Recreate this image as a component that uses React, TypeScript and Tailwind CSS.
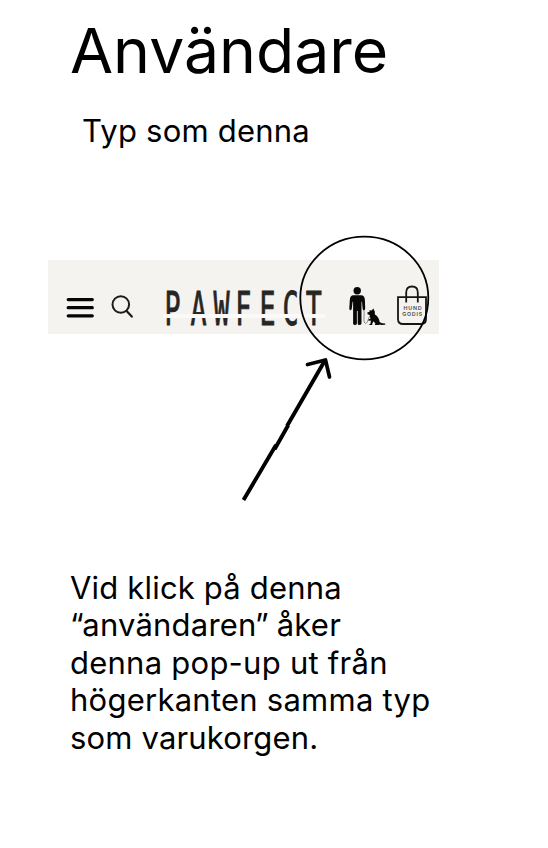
function MenuIcon() {
  return (
    <svg className="mt-[37px] h-[22px] w-[28px] shrink-0" viewBox="0 0 28 22" stroke="#050505" strokeWidth="3.2" strokeLinecap="round">
      <path d="M2.2 2.6H26.3M2.2 10.7H26.3M2.2 18.8H26.3" />
    </svg>
  );
}

function SearchIcon() {
  return (
    <svg className="mt-[34px] ml-[17px] h-[25px] w-[23px] shrink-0" viewBox="0 0 23 25" fill="none" stroke="#1c1c1b">
      <circle cx="9.8" cy="10.5" r="8.3" strokeWidth="2" />
      <path d="M15.6 17L20.8 22.6" strokeWidth="2.2" strokeLinecap="round" />
    </svg>
  );
}

function Logo() {
  return (
    <svg className="mt-[26px] ml-[29px] h-[46px] w-[162px] shrink-0 overflow-visible" viewBox="0 0 162 46">
      <text
        transform="translate(0 39.2) scale(0.58 1)"
        x="2.8 47.5 87 124.5 166.5 206 246"
        fontFamily="DejaVu Sans Mono, monospace"
        fontSize="46"
        fill="#262523"
        stroke="#262523"
        strokeWidth="0.9"
      >
        PAWFECT
      </text>
      <rect y="28" width="162" height="4" fill="#fbfaf8" />
    </svg>
  );
}

function UserIcon() {
  return (
    <svg className="mt-[26px] ml-[23px] h-[41px] w-[38px] shrink-0" viewBox="0 0 38 41" fill="#080808">
      <circle cx="9.2" cy="4.8" r="3.7" />
      <path d="M5.5 9.2H13Q16.8 9.2 16.9 14L17.2 22.6Q17 24.5 15.8 24.4Q14.8 24.3 14.6 22.5L14 15.8H13.5V37.5Q13.2 39 11.4 39Q9.8 39 9.7 37.5V25H8.9V37.5Q8.7 39 7 39Q5.3 39 5.1 37.5V15.8H4.6L3.8 22.5Q3.6 24.3 2.5 24.3Q1.2 24.2 1.3 22.5L1.8 14Q2 9.2 5.5 9.2Z" />
      <path d="M15.8 24C17 27 14.6 37 17.3 37.3C20.2 37.5 20 31 23 28.2" fill="none" stroke="#666" strokeWidth=".8" />
      <path d="M21.4 24.2L23.6 24.4L25.4 22.6L26.2 24.6L26.8 25.4L26.9 28.5Q30.9 30.8 31.6 36L34 37.2L37.2 37.6V38.7L33.5 38.9L31.6 38.4L31 39.1H26.7L27.4 37.8L25.6 35.2L24.2 37.8V39.1H21.2L21.4 38.2L22.6 37.6L22.8 34.6L20.4 34.7V33.6L22.4 32.8L21.8 29L19.6 28.3L19.3 26.5L21.6 25.7Z" />
    </svg>
  );
}

function BagIcon() {
  return (
    <svg className="mt-[25px] ml-[10px] h-[41px] w-[32px] shrink-0" viewBox="0 0 32 41">
      <g fill="none" stroke="#161615" strokeWidth="1.8">
        <path d="M2 12.2H30V34Q30 39 25 39H7Q2 39 2 34Z" />
        <path d="M10.2 17.4V7.5Q10.2 1.5 16 1.5Q21.8 1.5 21.8 7.5V17.4" />
      </g>
      <g fill="#4b4b49" fontFamily="Inter, sans-serif" fontSize="5.3" fontWeight="600">
        <text x="7.5" y="25" textLength="18">HUND</text>
        <text x="6.2" y="31.2" textLength="20">GODIS</text>
      </g>
    </svg>
  );
}

export default function App() {
  return (
    <main className="relative h-[848px] w-[548px] overflow-hidden bg-white font-['Inter',sans-serif] text-black">
      <h1 className="pt-[12px] pl-[70px] text-[62.5px] leading-[76px] font-normal">Användare</h1>
      <p className="pt-[23.5px] pl-[82px] text-[31px] leading-[37.5px] tracking-[0.22px]">Typ som denna</p>
      <header className="mt-[111px] ml-[48px] flex h-[74px] w-[391px] items-start bg-[#f4f3f0] pl-[18px]">
        <MenuIcon />
        <SearchIcon />
        <Logo />
        <UserIcon />
        <BagIcon />
      </header>
      <p className="mt-[234.5px] ml-[70px] text-[31px] leading-[37.5px] tracking-[0.25px] whitespace-nowrap">
        <span className="tracking-[0.18px]">Vid klick på denna</span><br />
        <span className="tracking-[-1.3px]">“</span><span className="tracking-[0.2px]">användare</span><span className="tracking-[-0.8px]">n”</span><span className="tracking-[0.2px]"> åker</span><br />
        denna pop-up ut från<br />
        högerkanten samma typ<br />
        <span className="tracking-[0.16px]">som varukorgen.</span>
      </p>
      <svg className="pointer-events-none absolute top-[230px] left-[230px] h-[280px] w-[210px]" viewBox="230 230 210 280" fill="none" stroke="#000">
        <ellipse cx="364.3" cy="298" rx="64" ry="61.3" strokeWidth="1.8" />
        <path d="M243.5 500L276 445M274.6 449.3L288.2 425.2M287 426L325.5 359.5" strokeWidth="3.9" />
        <path d="M307.5 364.5L325.5 360L329.5 377" strokeWidth="3.7" strokeLinecap="round" strokeLinejoin="round" />
      </svg>
    </main>
  );
}
